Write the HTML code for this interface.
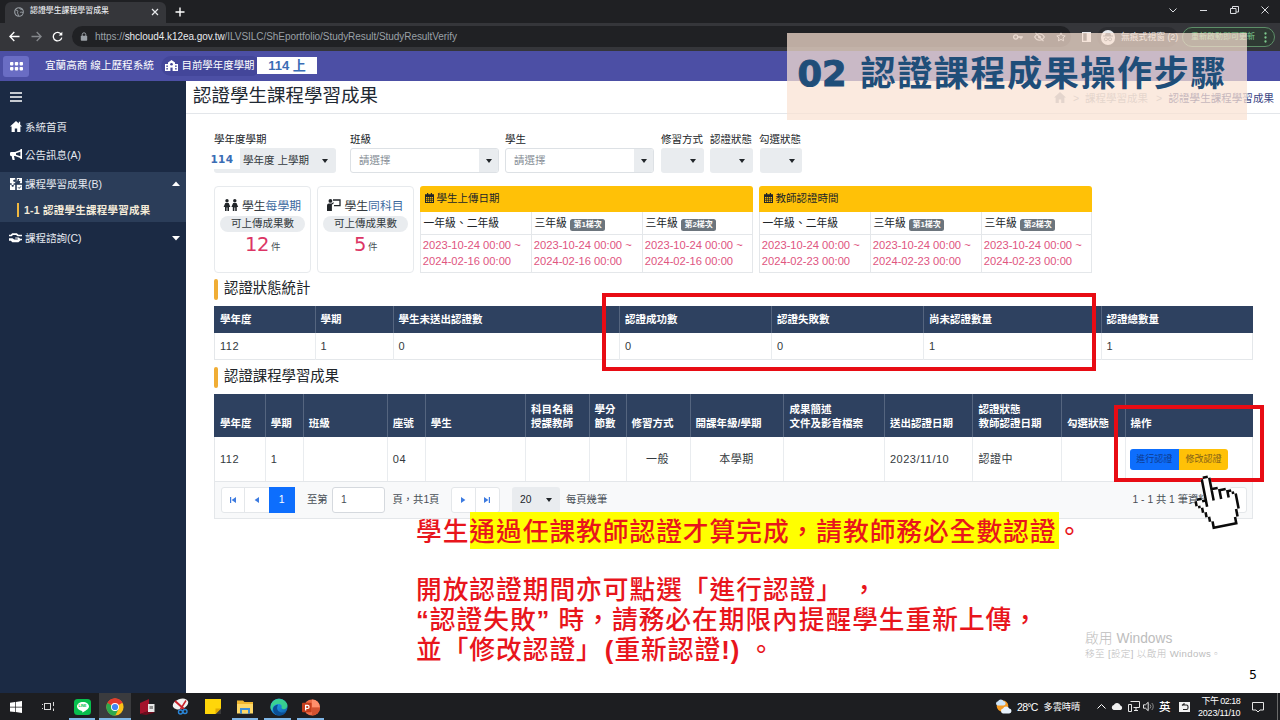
<!DOCTYPE html>
<html lang="zh-Hant">
<head>
<meta charset="utf-8">
<title>認證學生課程學習成果</title>
<style>
*{box-sizing:border-box;margin:0;padding:0}
html,body{width:1280px;height:720px;overflow:hidden;background:#fff}
body{font-family:"Liberation Sans","Noto Sans CJK TC",sans-serif;font-size:11px;color:#212529;position:relative}
.abs{position:absolute}
svg{display:block}
/* browser chrome */
#tabstrip{left:0;top:0;width:1280px;height:23px;background:#1f2023}
#tab{left:5px;top:2px;width:161px;height:21px;background:#35363a;border-radius:6px 6px 0 0}
#tabtitle{left:30px;top:6px;font-weight:500;font-size:7.9px;color:#e8eaed;white-space:nowrap;line-height:10px}
#toolbar{left:0;top:23px;width:1280px;height:28px;background:#35363a}
#urlpill{left:72px;top:26px;width:999px;height:21px;border-radius:11px;background:#202124}
#url{left:95px;top:30px;font-size:10px;line-height:13px;color:#9aa0a6;white-space:nowrap;letter-spacing:-0.05px}
#url b{font-weight:400;color:#e8eaed}
/* app bar */
#appbar{left:0;top:50.500px;width:1280px;height:30.500px;background:#4c4fa5}
#gridbtn{left:3px;top:56px;width:26px;height:21px;border-radius:3px;background:#6a6dc4}
#brand{left:45px;top:59px;font-size:10.6px;line-height:13px;color:#fff;white-space:nowrap}
#sempill{left:161px;top:56px;width:100px;height:20px;border-radius:10px;background:#43469a}
#semlabel{left:181.500px;top:59px;font-size:10.450px;line-height:13px;color:#fff;white-space:nowrap}
#sembox{left:257px;top:57px;width:60px;height:17px;background:#fff;color:#3a6db5;font-weight:700;font-size:13px;line-height:17px;text-align:center;white-space:nowrap}
/* sidebar */
#sidebar{left:0;top:81px;width:186px;height:612px;background:#1b2a44}
.mi{left:0;width:186px;height:28px;color:#e4e8ef;font-size:10.5px;line-height:28px;white-space:nowrap}
.mi span{position:absolute;left:25px;top:0}
/* taskbar */
#taskbar{left:0;top:693px;width:1280px;height:27px;background:#1d1e21}
.tt{color:#fff;white-space:nowrap;font-size:9px;line-height:12px}
.ul{top:718px;height:2px;background:#7fb6e6}
/* overlay title */
#ovl{left:787px;top:33px;width:460px;height:87px;background:rgba(249,226,210,.72)}
#ovltxt{left:860.500px;top:52px;font-size:35.200px;line-height:44px;font-weight:700;color:#1f4e79;white-space:nowrap;letter-spacing:1.450px}
#ovln{left:797.500px;top:52px;font-family:"DejaVu Sans",sans-serif;font-weight:700;font-size:35.300px;line-height:44px;color:#1f4e79;white-space:nowrap;transform-origin:0 50%;transform:scaleX(1.0);-webkit-text-stroke:1px #1f4e79}

/* content */
#ptitle{left:193px;top:84px;font-size:18.5px;line-height:24px;color:#1f2933;white-space:nowrap}
.flabel{top:132px;font-size:10.5px;line-height:14px;color:#212529;white-space:nowrap}
.sel{top:148px;height:24.5px;border-radius:3px;background:#e9ecef}
.selw{top:148px;height:24.5px;border-radius:3px;background:#fff;border:1px solid #dde1e5}
.selw i{position:absolute;right:0;top:0;bottom:0;width:19px;background:#e9ecef;border-radius:0 2px 2px 0}
.ph{top:153px;font-size:10.5px;line-height:14px;color:#868e96;white-space:nowrap}
.tri{width:0;height:0;border-left:3px solid transparent;border-right:3px solid transparent;border-top:4px solid #212529}
.card{top:185.5px;height:87px;border:1px solid #e7eaed;border-radius:4px;background:#fff}
.ctitle{top:198px;font-size:11.8px;line-height:16px;color:#343a40;white-space:nowrap}
.ctitle b{font-weight:400;color:#3d6a9f}
.cpill{top:216px;height:15.5px;border-radius:8px;background:#e9ecef;font-size:10.5px;line-height:15.5px;text-align:center;color:#343a40}
.cnum{top:232px;font-size:21px;line-height:26px;color:#dc3565;white-space:nowrap}
.cunit{top:240.500px;font-size:9.500px;line-height:12px;color:#495057}
.yhead{top:185.5px;height:26.5px;background:#ffc107;border-radius:3px 3px 0 0;font-size:10.5px;line-height:24.5px;color:#212529;white-space:nowrap}
.ybody{top:212px;height:60.5px;border:1px solid #e4e7ea;border-top:0;background:#fff}
.yv{top:212px;width:1px;height:60px;background:#e4e7ea}
.yh{top:234px;height:1px;background:#e4e7ea}
.gr{top:216px;font-size:10.8px;line-height:14px;color:#212529;white-space:nowrap}
.bdg{display:inline-block;vertical-align:.5px;margin-left:3px;background:#6c757d;color:#fff;font-size:8px;line-height:12.500px;font-weight:700;padding:0 3.500px;border-radius:2.500px}
.dt{top:237px;font-size:11.200px;line-height:16px;color:#e0557f;white-space:nowrap;margin-left:-.75px}
.sbar{left:214px;width:4px;border-radius:2px;background:#f0ad35}
.stitle{left:224px;font-size:14.4px;line-height:20px;color:#212529;white-space:nowrap}
.th{background:#2e4160}
.thl{width:1px;background:#55657f}
.tht{font-size:10.500px;line-height:14px;color:#fff;font-weight:700;white-space:nowrap}
.tdt{font-size:11px;line-height:14px;color:#343a40;white-space:nowrap;letter-spacing:.5px}
.tbl{border:1px solid #e4e7ea;background:#fff}
.tdl{width:1px;background:#e9ecef}
.pbtn{top:487px;height:25.5px;background:#fff;border:1px solid #e4e7ea}
.ptx{top:493px;font-size:10.3px;line-height:14px;color:#495057;white-space:nowrap}

.red{color:#e8151c;font-weight:500;font-size:25.700px;line-height:30px;letter-spacing:1px;white-space:nowrap}
.rbox{border:4.500px solid #e80c14}
.red b{font-weight:700}
.wm{color:#bdbdbd;white-space:nowrap}
</style>
</head>
<body>
<!-- ===== browser chrome ===== -->
<div id="tabstrip" class="abs"></div>
<div id="tab" class="abs"></div>
<svg class="abs" style="left:14px;top:7px" width="10" height="10" viewBox="0 0 10 10"><circle cx="5" cy="5" r="4.3" fill="none" stroke="#9aa0a6" stroke-width="1.1"/><path d="M2 3.2C3.5 3 4.2 4 3.6 5.2 3 6.4 4.4 6.8 4.6 8.8M5.5 1C6 2.4 7.4 2.6 8.6 2.4M6.2 5.4c1-.6 2.2-.2 2.8.6" fill="none" stroke="#9aa0a6" stroke-width="1"/></svg>
<div id="tabtitle" class="abs">認證學生課程學習成果</div>
<svg class="abs" style="left:151px;top:8px" width="8" height="8" viewBox="0 0 8 8"><path d="M1 1l6 6M7 1L1 7" stroke="#e8eaed" stroke-width="1.2" fill="none"/></svg>
<svg class="abs" style="left:175px;top:7px" width="10" height="10" viewBox="0 0 10 10"><path d="M5 .5v9M.5 5h9" stroke="#fff" stroke-width="1.4" fill="none"/></svg>
<div id="toolbar" class="abs"></div>
<div id="urlpill" class="abs"></div>
<svg class="abs" style="left:9px;top:31px" width="11" height="11" viewBox="0 0 11 11"><path d="M10.5 5.5H1.2M5.3 1L.9 5.5l4.4 4.5" stroke="#fff" stroke-width="1.3" fill="none"/></svg>
<svg class="abs" style="left:31px;top:31px" width="11" height="11" viewBox="0 0 11 11"><path d="M.5 5.5h9.3M5.7 1l4.4 4.5L5.7 10" stroke="#84878b" stroke-width="1.3" fill="none"/></svg>
<svg class="abs" style="left:52px;top:31px" width="11" height="11" viewBox="0 0 11 11"><path d="M9.2 3.2A4.3 4.3 0 1 0 9.8 6.6" stroke="#fff" stroke-width="1.3" fill="none"/><path d="M10.3.8v3.6H6.7z" fill="#fff"/></svg>
<svg class="abs" style="left:80px;top:32px" width="8" height="9" viewBox="0 0 8 9"><rect x=".8" y="3.8" width="6.4" height="5" rx=".8" fill="#9aa0a6"/><path d="M2.2 4V2.6a1.8 1.8 0 0 1 3.6 0V4" stroke="#9aa0a6" stroke-width="1" fill="none"/></svg>
<div id="url" class="abs">https://<b>shcloud4.k12ea.gov.tw</b>/ILVSILC/ShEportfolio/StudyResult/StudyResultVerify</div>

<svg class="abs" style="left:1169px;top:7.500px" width="8" height="5" viewBox="0 0 8 5"><path d="M.5.500l3.500 3.500L7.500.5" stroke="#dadce0" stroke-width="1" fill="none"/></svg>
<div class="abs" style="left:1200px;top:9.500px;width:7px;height:1px;background:#dadce0"></div>
<svg class="abs" style="left:1229.500px;top:6px" width="9" height="8" viewBox="0 0 9 8"><path d="M.5 2.500h5.500v5H.5z" fill="none" stroke="#dadce0" stroke-width="1"/><path d="M2.500 2.500V.5h6v5.500H6" fill="none" stroke="#dadce0" stroke-width="1"/></svg>
<svg class="abs" style="left:1261px;top:6px" width="8" height="8" viewBox="0 0 8 8"><path d="M.5.500l7 7M7.500.5l-7 7" stroke="#dadce0" stroke-width="1" fill="none"/></svg>
<svg class="abs" style="left:1012.500px;top:34px" width="10" height="6" viewBox="0 0 10 6"><circle cx="2.700" cy="3" r="2.100" fill="none" stroke="#c4c7cc" stroke-width="1.300"/><path d="M4.800 3h5M8 3v2.300" stroke="#c4c7cc" stroke-width="1.300" fill="none"/></svg>
<svg class="abs" style="left:1033.500px;top:32px" width="11" height="10" viewBox="0 0 11 10"><path d="M.6 5C2 2.500 3.700 1.700 5.500 1.700S9 2.500 10.400 5C9 7.500 7.300 8.300 5.500 8.300S2 7.500.6 5z" fill="none" stroke="#c4c7cc" stroke-width="1.100"/><circle cx="5.500" cy="5" r="1.500" fill="#c4c7cc"/><path d="M1.500.8l8 8.400" stroke="#c4c7cc" stroke-width="1.100"/></svg>
<svg class="abs" style="left:1055.500px;top:32px" width="10" height="10" viewBox="0 0 10 10"><path d="M5 .9l1.250 2.700 2.950.35-2.200 2 .6 2.900L5 7.400 2.400 8.850l.6-2.900-2.200-2 2.950-.35z" fill="none" stroke="#c4c7cc" stroke-width="1"/></svg>
<svg class="abs" style="left:1082px;top:32px" width="9" height="10" viewBox="0 0 9 10"><path d="M.6.600h7.800v8.800H.6z" fill="none" stroke="#e8eaed" stroke-width="1.200"/><path d="M4.700.6h3.700v8.800H4.700z" fill="#e8eaed"/></svg>
<div class="abs" style="left:1097px;top:27px;width:81px;height:20px;border-radius:10px;background:#2c2d31"></div>
<div class="abs" style="left:1100.500px;top:30px;width:14.500px;height:14.500px;border-radius:50%;background:#e8eaed"></div>
<svg class="abs" style="left:1103px;top:33px" width="10" height="9" viewBox="0 0 10 9"><path d="M2.800 0h4.400l.9 2.600H10v.9H0v-.9h1.900z" fill="#5f6368"/><circle cx="2.900" cy="6.300" r="1.500" fill="none" stroke="#5f6368" stroke-width=".9"/><circle cx="7.100" cy="6.300" r="1.500" fill="none" stroke="#5f6368" stroke-width=".9"/><path d="M4.400 6.100h1.200" stroke="#5f6368" stroke-width=".8"/></svg>
<div class="abs" style="left:1121px;top:31px;font-size:8.800px;line-height:12px;color:#e8eaed;white-space:nowrap">無痕式視窗 (2)</div>
<div class="abs" style="left:1182px;top:26.500px;width:92.500px;height:20.500px;border-radius:10.500px;border:1px solid #5d8f68;background:#2e3a33"></div>
<div class="abs" style="left:1191px;top:31px;font-size:8px;line-height:12px;color:#7ecb8f;white-space:nowrap">重新啟動即可更新</div>
<svg class="abs" style="left:1264px;top:31.500px" width="3" height="11" viewBox="0 0 3 11"><g fill="#7ecb8f"><circle cx="1.500" cy="1.500" r="1.150"/><circle cx="1.500" cy="5.500" r="1.150"/><circle cx="1.500" cy="9.500" r="1.150"/></g></svg>
<!-- ===== app bar ===== -->
<div id="appbar" class="abs"></div>
<div id="gridbtn" class="abs"></div>
<svg class="abs" style="left:10px;top:62px" width="13" height="9" viewBox="0 0 13 9"><g fill="#fff"><rect x="0" y="0" width="3.4" height="3.4" rx=".8"/><rect x="4.8" y="0" width="3.4" height="3.4" rx=".8"/><rect x="9.6" y="0" width="3.4" height="3.4" rx=".8"/><rect x="0" y="5" width="3.4" height="3.4" rx=".8"/><rect x="4.8" y="5" width="3.4" height="3.4" rx=".8"/><rect x="9.6" y="5" width="3.4" height="3.4" rx=".8"/></g></svg>
<div id="brand" class="abs">宜蘭高商 線上歷程系統</div>
<div id="sempill" class="abs"></div>
<svg class="abs" style="left:165px;top:60px" width="13" height="11" viewBox="0 0 13 11"><path d="M6.5 0L10 2.6V4h3v7H0V4h3V2.6z" fill="#fff"/><g fill="#43469a"><rect x="1.4" y="5.4" width="1.4" height="1.6"/><rect x="1.4" y="8" width="1.4" height="1.6"/><rect x="10.2" y="5.4" width="1.4" height="1.6"/><rect x="10.2" y="8" width="1.4" height="1.6"/><rect x="5.4" y="7.6" width="2.2" height="3.4"/><circle cx="6.5" cy="4.2" r="1.3"/></g></svg>
<div id="semlabel" class="abs">目前學年度學期</div>
<div id="sembox" class="abs">114 上</div>

<!-- ===== sidebar ===== -->
<div id="sidebar" class="abs"></div>

<svg class="abs" style="left:10px;top:92px" width="12" height="10" viewBox="0 0 12 10"><path d="M0 1h12M0 5h12M0 9h12" stroke="#fff" stroke-width="1.7" fill="none"/></svg>
<div class="abs" style="left:0;top:172px;width:186px;height:50px;background:#2b3d59"></div>
<svg class="abs" style="left:10px;top:121px" width="12" height="11" viewBox="0 0 12 11"><path d="M6 0L0 5.400h1.600V11h3.200V7.400h2.400V11h3.200V5.400H12L10.200 3.800V.8H8.800v1.700z" fill="#fff"/></svg>
<div class="abs mi" style="top:113px"><span>系統首頁</span></div>
<svg class="abs" style="left:10px;top:149px" width="12" height="12" viewBox="0 0 12 12"><path d="M10.400 0v1L5 3H1.200Q0 3 0 4.200v1.600Q0 7 1.200 7h.4l.8 3.600q.1.400.5.400h1.400q.5 0 .4-.5L4 7h1l5.400 2v1H12V0zM10.400 2.700v4.600L6 5.800V4.200z" fill="#fff" fill-rule="evenodd"/></svg>
<div class="abs mi" style="top:141px"><span>公告訊息(A)</span></div>
<svg class="abs" style="left:10px;top:178px" width="12" height="12" viewBox="0 0 12 12"><g fill="#fff"><path d="M0 0h5.200v2.200a1.100 1.100 0 1 0 0 1.100V5.200H3.500a1.100 1.100 0 1 1-1.700 0H0z"/><path d="M6.800 0H12v5.200H9.700L10.400 3H8.700L9.400.900H7.900L6.800 4z"/><path d="M0 6.800h2a1.100 1.100 0 1 0 1.400 0h1.800V12H0z"/><path d="M6.800 6.800H12V12H6.800z"/></g><path d="M8.200 9.400l1 1 1.700-2" stroke="#2b3d59" stroke-width="1" fill="none"/></svg>
<div class="abs mi" style="top:170px"><span>課程學習成果(B)</span></div>
<svg class="abs" style="left:172px;top:181px" width="8" height="5" viewBox="0 0 8 5"><path d="M0 5l4-4.600L8 5z" fill="#fff"/></svg>
<div class="abs" style="left:17px;top:203px;width:2px;height:14px;background:#f0b840"></div>
<div class="abs mi" style="top:196px;font-weight:700;color:#f3ead8;font-size:10.500px;letter-spacing:.25px"><span style="left:24px">1-1 認證學生課程學習成果</span></div>
<svg class="abs" style="left:9px;top:232px" width="13" height="11" viewBox="0 0 13 11"><path d="M3.200 1.200h4.600l1.700 1.500H13v1.600H8.600L7 3H4L2.600 4.300H0V2.700h1.700zM0 6.200h3.500l1.700 1.400h3.300c.6 0 .6-1-.1-1H6.200V5.500h3.600L11.200 6.700H13v1.600h-1.300L9.400 10.300H3.300L1.800 8.800H0z" fill="#fff"/></svg>
<div class="abs mi" style="top:224px"><span>課程諮詢(C)</span></div>
<svg class="abs" style="left:172px;top:236px" width="8" height="5" viewBox="0 0 8 5"><path d="M0 0l4 4.600L8 0z" fill="#fff"/></svg>


<div id="ptitle" class="abs">認證學生課程學習成果</div>
<div class="abs" style="left:186px;top:112.500px;width:1094px;height:1px;background:#e3e6ea"></div>
<svg class="abs" style="left:1054px;top:92px" width="12" height="11" viewBox="0 0 12 11"><path d="M6 0L0 5.400h1.600V11h3.200V7.400h2.400V11h3.200V5.400H12z" fill="#adb5bd"/></svg>
<div class="abs" style="left:1073px;top:91px;font-size:10.500px;line-height:14px;color:#adb5bd;white-space:nowrap">&gt;</div><div class="abs" style="left:1085px;top:91px;font-size:10.500px;line-height:14px;color:#adb5bd;white-space:nowrap">課程學習成果</div><div class="abs" style="left:1156px;top:91px;font-size:10.500px;line-height:14px;color:#adb5bd;white-space:nowrap">&gt;</div><div class="abs" style="left:1168.500px;top:91px;font-size:10.550px;line-height:14px;color:#3c4684;white-space:nowrap">認證學生課程學習成果</div>
<div class="abs flabel" style="left:214px">學年度學期</div>
<div class="abs flabel" style="left:350px">班級</div>
<div class="abs flabel" style="left:505px">學生</div>
<div class="abs flabel" style="left:661px">修習方式</div>
<div class="abs flabel" style="left:710px">認證狀態</div>
<div class="abs flabel" style="left:759px">勾選狀態</div>
<div class="abs sel" style="left:214px;width:122px"></div>
<div class="abs" style="left:243px;top:153px;font-size:10.5px;line-height:14px;color:#343a40;white-space:nowrap">學年度 上學期</div>
<div class="abs tri" style="left:322px;top:158.500px"></div>
<div class="abs" style="left:210px;top:148px;width:30px;height:21px;background:#fff"></div>
<div class="abs" style="left:210.500px;top:152px;font-size:11.5px;line-height:14px;font-weight:700;color:#3a6db5;letter-spacing:.3px;font-family:'DejaVu Sans',sans-serif;font-size:10.500px">114</div>
<div class="abs selw" style="left:350px;width:148.500px"><i></i></div>
<div class="abs ph" style="left:359px">請選擇</div>
<div class="abs tri" style="left:485.500px;top:158.500px"></div>
<div class="abs selw" style="left:505px;width:149px"><i></i></div>
<div class="abs ph" style="left:514px">請選擇</div>
<div class="abs tri" style="left:641px;top:158.500px"></div>
<div class="abs sel" style="left:661px;width:42.500px"></div>
<div class="abs tri" style="left:690px;top:158.500px"></div>
<div class="abs sel" style="left:710px;width:42.500px"></div>
<div class="abs tri" style="left:739px;top:158.500px"></div>
<div class="abs sel" style="left:759.5px;width:42.500px"></div>
<div class="abs tri" style="left:788.5px;top:158.500px"></div>
<div class="abs card" style="left:214px;width:97px"></div>
<div class="abs card" style="left:317px;width:96.500px"></div>
<svg class="abs" style="left:223px;top:199px" width="16" height="12" viewBox="0 0 16 12"><g fill="#212529"><circle cx="4" cy="1.700" r="1.700"/><path d="M2.300 4h3.400L7.400 8H6v4H4.400V8.500h-.8V12H2V8H.6z"/><circle cx="11.800" cy="1.700" r="1.700"/><path d="M10.100 4h3.400L15.200 8h-1.400v4h-1.600V8.500h-.8V12H9.800V8H8.400z"/></g></svg>
<div class="abs ctitle" style="left:242px">學生<b>每學期</b></div>
<div class="abs cpill" style="left:220px;width:85px">可上傳成果數</div>
<div class="abs cnum" style="left:245px;font-family:'DejaVu Sans',sans-serif;letter-spacing:-.5px;font-size:19.500px">12</div>
<div class="abs cunit" style="left:271px">件</div>
<svg class="abs" style="left:327px;top:199px" width="14" height="12" viewBox="0 0 14 12"><g fill="#212529"><circle cx="3.400" cy="1.900" r="1.900"/><path d="M0 12V6.500Q0 4.600 1.900 4.600h2.600l1.800-1.400.7.900L4.900 5.800V12z"/></g><path d="M6 1h7v5.600H7" fill="none" stroke="#212529" stroke-width="1.300"/></svg>
<div class="abs ctitle" style="left:344.500px">學生<b>同科目</b></div>
<div class="abs cpill" style="left:323px;width:85px">可上傳成果數</div>
<div class="abs cnum" style="left:354px;font-family:'DejaVu Sans',sans-serif;font-size:19.500px">5</div>
<div class="abs cunit" style="left:368px">件</div>
<div class="abs ybody" style="left:419.5px;width:333px"></div>
<div class="abs yhead" style="left:419.5px;width:333px;padding-left:5px"><svg style="display:inline-block;vertical-align:-1px;margin-right:3px" width="9" height="10" viewBox="0 0 9 10"><path d="M2 0h1.200v1.200h2.600V0H7v1.200h2V10H0V1.200h2zM1 4v5h7V4z" fill="#212529" fill-rule="evenodd"/><path d="M2.600 4v5M4.500 4v5M6.400 4v5M1 5.700h7M1 7.400h7" stroke="#212529" stroke-width=".7"/></svg>學生上傳日期</div>
<div class="abs yh" style="left:419.5px;width:333px"></div>
<div class="abs gr" style="left:423.5px">一年級、二年級</div>
<div class="abs dt" style="left:423.5px">2023-10-24 00:00 ~<br>2024-02-16 00:00</div>
<div class="abs yv" style="left:530.5px"></div>
<div class="abs gr" style="left:534.5px">三年級<span class="bdg">第1梯次</span></div>
<div class="abs dt" style="left:534.5px">2023-10-24 00:00 ~<br>2024-02-16 00:00</div>
<div class="abs yv" style="left:641.5px"></div>
<div class="abs gr" style="left:645.5px">三年級<span class="bdg">第2梯次</span></div>
<div class="abs dt" style="left:645.5px">2023-10-24 00:00 ~<br>2024-02-16 00:00</div>
<div class="abs ybody" style="left:758.5px;width:333px"></div>
<div class="abs yhead" style="left:758.5px;width:333px;padding-left:5px"><svg style="display:inline-block;vertical-align:-1px;margin-right:3px" width="9" height="10" viewBox="0 0 9 10"><path d="M2 0h1.200v1.200h2.600V0H7v1.200h2V10H0V1.200h2zM1 4v5h7V4z" fill="#212529" fill-rule="evenodd"/><path d="M2.600 4v5M4.500 4v5M6.400 4v5M1 5.700h7M1 7.400h7" stroke="#212529" stroke-width=".7"/></svg>教師認證時間</div>
<div class="abs yh" style="left:758.5px;width:333px"></div>
<div class="abs gr" style="left:762.5px">一年級、二年級</div>
<div class="abs dt" style="left:762.5px">2023-10-24 00:00 ~<br>2024-02-23 00:00</div>
<div class="abs yv" style="left:869.5px"></div>
<div class="abs gr" style="left:873.5px">三年級<span class="bdg">第1梯次</span></div>
<div class="abs dt" style="left:873.5px">2023-10-24 00:00 ~<br>2024-02-23 00:00</div>
<div class="abs yv" style="left:980.5px"></div>
<div class="abs gr" style="left:984.5px">三年級<span class="bdg">第2梯次</span></div>
<div class="abs dt" style="left:984.5px">2023-10-24 00:00 ~<br>2024-02-23 00:00</div>
<div class="abs sbar" style="top:278.500px;height:21px"></div>
<div class="abs stitle" style="top:278px">認證狀態統計</div>
<div class="abs th" style="left:214px;top:306px;width:1038.500px;height:26.500px"></div>
<div class="abs tbl" style="left:214px;top:332.500px;width:1038.500px;height:27.500px;border-top:0"></div>
<div class="abs tht" style="left:220px;top:312px">學年度</div>
<div class="abs tdt" style="left:220px;top:339px">112</div>
<div class="abs thl" style="left:314.5px;top:306px;height:26.500px"></div>
<div class="abs tdl" style="left:314.5px;top:332.500px;height:27px"></div>
<div class="abs tht" style="left:320.5px;top:312px">學期</div>
<div class="abs tdt" style="left:320.5px;top:339px">1</div>
<div class="abs thl" style="left:392.5px;top:306px;height:26.500px"></div>
<div class="abs tdl" style="left:392.5px;top:332.500px;height:27px"></div>
<div class="abs tht" style="left:398.5px;top:312px">學生未送出認證數</div>
<div class="abs tdt" style="left:398.5px;top:339px">0</div>
<div class="abs thl" style="left:619px;top:306px;height:26.500px"></div>
<div class="abs tdl" style="left:619px;top:332.500px;height:27px"></div>
<div class="abs tht" style="left:625px;top:312px">認證成功數</div>
<div class="abs tdt" style="left:625px;top:339px">0</div>
<div class="abs thl" style="left:771px;top:306px;height:26.500px"></div>
<div class="abs tdl" style="left:771px;top:332.500px;height:27px"></div>
<div class="abs tht" style="left:777px;top:312px">認證失敗數</div>
<div class="abs tdt" style="left:777px;top:339px">0</div>
<div class="abs thl" style="left:923px;top:306px;height:26.500px"></div>
<div class="abs tdl" style="left:923px;top:332.500px;height:27px"></div>
<div class="abs tht" style="left:929px;top:312px">尚未認證數量</div>
<div class="abs tdt" style="left:929px;top:339px">1</div>
<div class="abs thl" style="left:1100.5px;top:306px;height:26.500px"></div>
<div class="abs tdl" style="left:1100.5px;top:332.500px;height:27px"></div>
<div class="abs tht" style="left:1106.5px;top:312px">認證總數量</div>
<div class="abs tdt" style="left:1106.5px;top:339px">1</div>
<div class="abs sbar" style="top:366.500px;height:21.500px"></div>
<div class="abs stitle" style="top:366px">認證課程學習成果</div>
<div class="abs th" style="left:214px;top:394px;width:1038.500px;height:43px"></div>
<div class="abs tbl" style="left:214px;top:437px;width:1038.500px;height:44.500px;border-top:0"></div>
<div class="abs" style="left:214px;top:481.500px;width:1038.500px;height:37.500px;background:#f8f9fa;border:1px solid #e4e7ea;border-top:0"></div>
<div class="abs tht" style="left:220px;top:416px;line-height:14.600px">學年度</div>
<div class="abs tdt" style="left:220px;top:452px">112</div>
<div class="abs thl" style="left:264.7px;top:394px;height:43px"></div>
<div class="abs tdl" style="left:264.7px;top:437px;height:44px"></div>
<div class="abs tht" style="left:270.7px;top:416px;line-height:14.600px">學期</div>
<div class="abs tdt" style="left:270.7px;top:452px">1</div>
<div class="abs thl" style="left:302.8px;top:394px;height:43px"></div>
<div class="abs tdl" style="left:302.8px;top:437px;height:44px"></div>
<div class="abs tht" style="left:308.8px;top:416px;line-height:14.600px">班級</div>
<div class="abs thl" style="left:386.8px;top:394px;height:43px"></div>
<div class="abs tdl" style="left:386.8px;top:437px;height:44px"></div>
<div class="abs tht" style="left:392.8px;top:416px;line-height:14.600px">座號</div>
<div class="abs tdt" style="left:392.8px;top:452px">04</div>
<div class="abs thl" style="left:424.8px;top:394px;height:43px"></div>
<div class="abs tdl" style="left:424.8px;top:437px;height:44px"></div>
<div class="abs tht" style="left:430.8px;top:416px;line-height:14.600px">學生</div>
<div class="abs thl" style="left:525px;top:394px;height:43px"></div>
<div class="abs tdl" style="left:525px;top:437px;height:44px"></div>
<div class="abs tht" style="left:531px;top:401.5px;line-height:14.600px">科目名稱<br>授課教師</div>
<div class="abs thl" style="left:588.5px;top:394px;height:43px"></div>
<div class="abs tdl" style="left:588.5px;top:437px;height:44px"></div>
<div class="abs tht" style="left:594.5px;top:401.5px;line-height:14.600px">學分<br>節數</div>
<div class="abs thl" style="left:625.6px;top:394px;height:43px"></div>
<div class="abs tdl" style="left:625.6px;top:437px;height:44px"></div>
<div class="abs tht" style="left:631.6px;top:416px;line-height:14.600px">修習方式</div>
<div class="abs tdt" style="left:625.6px;width:63.89999999999998px;text-align:center;top:452px">一般</div>
<div class="abs thl" style="left:689.5px;top:394px;height:43px"></div>
<div class="abs tdl" style="left:689.5px;top:437px;height:44px"></div>
<div class="abs tht" style="left:695.5px;top:416px;line-height:14.600px">開課年級/學期</div>
<div class="abs tdt" style="left:689.5px;width:93.89999999999998px;text-align:center;top:452px">本學期</div>
<div class="abs thl" style="left:783.4px;top:394px;height:43px"></div>
<div class="abs tdl" style="left:783.4px;top:437px;height:44px"></div>
<div class="abs tht" style="left:789.4px;top:401.5px;line-height:14.600px">成果簡述<br>文件及影音檔案</div>
<div class="abs thl" style="left:884px;top:394px;height:43px"></div>
<div class="abs tdl" style="left:884px;top:437px;height:44px"></div>
<div class="abs tht" style="left:890px;top:416px;line-height:14.600px">送出認證日期</div>
<div class="abs tdt" style="left:890px;top:452px">2023/11/10</div>
<div class="abs thl" style="left:972.4px;top:394px;height:43px"></div>
<div class="abs tdl" style="left:972.4px;top:437px;height:44px"></div>
<div class="abs tht" style="left:978.4px;top:401.5px;line-height:14.600px">認證狀態<br>教師認證日期</div>
<div class="abs tdt" style="left:978.4px;top:452px">認證中</div>
<div class="abs thl" style="left:1061px;top:394px;height:43px"></div>
<div class="abs tdl" style="left:1061px;top:437px;height:44px"></div>
<div class="abs tht" style="left:1067px;top:416px;line-height:14.600px">勾選狀態</div>
<div class="abs thl" style="left:1124.6px;top:394px;height:43px"></div>
<div class="abs tdl" style="left:1124.6px;top:437px;height:44px"></div>
<div class="abs tht" style="left:1130.6px;top:416px;line-height:14.600px">操作</div>
<div class="abs" style="left:1130px;top:449px;width:48.500px;height:20.500px;background:#0d6efd;border-radius:3px 0 0 3px;font-size:9px;line-height:20.500px;text-align:center;color:#0f3a8c;white-space:nowrap">進行認證</div>
<div class="abs" style="left:1178.500px;top:449px;width:49.800px;height:20.500px;background:#ffc107;border-radius:0 3px 3px 0;font-size:9px;line-height:20.500px;text-align:center;color:#80601a;white-space:nowrap">修改認證</div>
<div class="abs pbtn" style="left:220.500px;width:24px;border-radius:3px 0 0 3px"><svg width="6" height="6" viewBox="0 0 6 6" style="margin:9px auto 0"><path d="M0 0h1.200v6H0zM6 0v6L1.600 3z" fill="#3d7be0"/></svg></div>
<div class="abs pbtn" style="left:243.500px;width:26px"><svg width="6" height="6" viewBox="0 0 6 6" style="margin:9px auto 0"><path d="M5 0v6L.6 3z" fill="#3d7be0"/></svg></div>
<div class="abs" style="left:269px;top:487px;width:25.500px;height:25.500px;background:#0d6efd;color:#fff;font-size:10.500px;line-height:25.500px;text-align:center">1</div>
<div class="abs ptx" style="left:307px">至第</div>
<div class="abs" style="left:332px;top:487px;width:53px;height:25.500px;background:#fff;border:1px solid #d5d9de;border-radius:3px"></div>
<div class="abs ptx" style="left:341px">1</div>
<div class="abs ptx" style="left:392.500px">頁，共1頁</div>
<div class="abs pbtn" style="left:450.500px;width:25px;border-radius:3px 0 0 3px"><svg width="6" height="6" viewBox="0 0 6 6" style="margin:9px auto 0"><path d="M1 0v6l4.400-3z" fill="#3d7be0"/></svg></div>
<div class="abs pbtn" style="left:474.500px;width:25px;border-radius:0 3px 3px 0"><svg width="6" height="6" viewBox="0 0 6 6" style="margin:9px auto 0"><path d="M4.800 0H6v6H4.800zM0 0v6l4.400-3z" fill="#3d7be0"/></svg></div>
<div class="abs" style="left:511.500px;top:487px;width:48px;height:25.500px;background:#e9ecef;border-radius:3px"></div>
<div class="abs ptx" style="left:520px;color:#212529">20</div>
<div class="abs tri" style="left:546px;top:498px"></div>
<div class="abs ptx" style="left:566px">每頁幾筆</div>
<div class="abs ptx" style="left:1132.500px">1 - 1 共 1 筆資料</div>
<div class="abs" style="left:1229px;top:487px;width:18px;height:25.500px;background:#fff;border:1px solid #e4e7ea;border-radius:3px"></div>

<!-- ===== taskbar ===== -->
<div id="taskbar" class="abs"></div>
<svg class="abs" style="left:10px;top:701px" width="12" height="12" viewBox="0 0 12 12"><path d="M0 1.700L5 1v4.700H0zM5.700.9L12 0v5.700H5.700zM0 6.400h5v4.700l-5-.7zM5.700 6.400H12V12l-6.300-.9z" fill="#fff"/></svg>
<svg class="abs" style="left:42px;top:701px" width="13" height="11" viewBox="0 0 13 11"><g fill="none" stroke="#d8d8d8" stroke-width="1"><rect x="2.500" y="2.500" width="6" height="6"/><path d="M2.500.5v.01M8.500.5v.01M0 3.500h1M0 7.500h1M2.500 10.500v.01M8.500 10.500v.01M11.500 1v4M11.500 7.500v2.500"/></g></svg>
<div class="abs" style="left:99px;top:693px;width:32px;height:27px;background:#3a3b3e"></div>
<div class="abs ul" style="left:68.500px;width:26.500px"></div>
<div class="abs ul" style="left:99px;width:32px"></div>
<div class="abs ul" style="left:231.500px;width:26.500px"></div>
<div class="abs ul" style="left:264px;width:27px"></div>
<div class="abs ul" style="left:297px;width:26.500px"></div>
<!-- LINE -->
<div class="abs" style="left:74px;top:699px;width:16.500px;height:15.500px;border-radius:3.500px;background:#08bf4e"></div>
<svg class="abs" style="left:76.500px;top:701.500px" width="12" height="11" viewBox="0 0 12 11"><path d="M6 0C2.700 0 0 2 0 4.500 0 6.700 2.100 8.500 5 8.900c.5.100.4.500.3 1.200-.1.500.3.500 1.500-.3C9 8.300 12 6.800 12 4.500 12 2 9.300 0 6 0z" fill="#fff"/></svg>
<div class="abs" style="left:76.500px;top:704px;width:12px;text-align:center;font-size:3.600px;line-height:4px;font-weight:700;color:#08bf4e;letter-spacing:-.1px">LINE</div>
<!-- Chrome -->
<svg class="abs" style="left:106px;top:698px" width="18" height="18" viewBox="0 0 18 18"><circle cx="9" cy="9" r="8.600" fill="#fbc116"/><path d="M9 9L1.550 4.700A8.600 8.600 0 0 1 16.450 4.700z" fill="#e33b2e"/><path d="M9 9L1.550 4.700A8.600 8.600 0 0 0 9.300 17.600L12.500 11z" fill="#2da94f"/><path d="M9 5h7.600A8.600 8.600 0 0 0 1.550 4.700L5.400 7.200A4 4 0 0 1 9 5z" fill="#e33b2e"/><circle cx="9" cy="9" r="4" fill="#fff"/><circle cx="9" cy="9" r="3.100" fill="#4285f4"/></svg>
<!-- red book -->
<svg class="abs" style="left:140px;top:699px" width="16" height="16" viewBox="0 0 16 16"><path d="M0 4L9 0v12L0 15z" fill="#a3122b"/><path d="M0 15l9-3 6 1.500L6 16z" fill="#6e0c1d"/><path d="M8 5h6.500v8L8 13z" fill="#e8e8e8"/><path d="M9.500 7h3.500v3H9.500z" fill="#8c8c8c"/></svg>
<!-- snip -->
<svg class="abs" style="left:172px;top:698px" width="17" height="17" viewBox="0 0 17 17"><ellipse cx="8.500" cy="6" rx="8" ry="5" fill="#f2f2f2" transform="rotate(-20 8.500 6)"/><path d="M3 3l9 8" stroke="#c8202a" stroke-width="2"/><path d="M14 2.500L8 12" stroke="#c8202a" stroke-width="1.500"/><circle cx="8.500" cy="14" r="2" fill="none" stroke="#2a86d8" stroke-width="1.400"/><circle cx="13" cy="13.500" r="2" fill="none" stroke="#2a86d8" stroke-width="1.400"/></svg>
<!-- sticky -->
<svg class="abs" style="left:205px;top:699px" width="16" height="15" viewBox="0 0 16 15"><path d="M0 0h16v15H0z" fill="#ffd60a"/><path d="M10.500 15L16 9.500V15z" fill="#3a3a3a"/><path d="M10.500 15V9.500H16z" fill="#e0a800"/></svg>
<!-- explorer -->
<svg class="abs" style="left:237px;top:699px" width="16" height="15" viewBox="0 0 16 15"><path d="M0 1.500h6l1.500 1.500H16v11H0z" fill="#f0b732"/><path d="M0 5h16v9.500H0z" fill="#ffd867"/><path d="M3 9h10v5.500H3z" fill="#3f8fd8"/><path d="M5 11h6v3.500H5z" fill="#ffd867"/></svg>
<!-- edge -->
<svg class="abs" style="left:269.500px;top:698px" width="18" height="18" viewBox="0 0 18 18"><defs><linearGradient id="eg" x1="0" y1="0" x2="1" y2="1"><stop offset="0" stop-color="#35c1f1"/><stop offset=".5" stop-color="#1b88d8"/><stop offset="1" stop-color="#0c59a4"/></linearGradient></defs><circle cx="9" cy="9" r="8.600" fill="url(#eg)"/><path d="M.6 10C.6 4 5 1 9 1c5 0 8.400 3.600 8.400 6.600 0 2.400-1.800 3.600-3.600 3.600-1.700 0-2.600-.8-2.300-1.600.5-1.200.1-3.600-2.900-3.600C5 6 2 8.500 2.300 12.500 1.200 11.800.6 11 .6 10z" fill="#3ddb85" opacity=".85"/><path d="M7.200 9.300c-.5 2.600 1.600 5.300 5.300 5.300 1.600 0 3-.7 3.700-1.400-1 2.600-3.800 4.400-7 4.400A6.400 6.400 0 0 1 3 11.200C3 8.500 5.600 6.800 8 6.800c-.4.600-.7 1.600-.8 2.500z" fill="#0b4f96"/></svg>
<!-- ppt -->
<svg class="abs" style="left:301.500px;top:698.500px" width="18" height="17" viewBox="0 0 18 17"><circle cx="10" cy="8.500" r="8" fill="#ed6c47"/><path d="M10 .5a8 8 0 0 1 8 8h-8z" fill="#ff8f6b"/><path d="M10 16.500a8 8 0 0 0 8-8h-8z" fill="#d35230"/><rect x="0" y="3.700" width="9.600" height="9.600" rx="1" fill="#c43e1c"/><path d="M3 5.800h2.600a2.100 2.100 0 0 1 0 4.200H4.300v1.400H3zM4.300 6.900v2h1.100a1 1 0 0 0 0-2z" fill="#fff" fill-rule="evenodd"/></svg>
<!-- weather -->
<svg class="abs" style="left:995px;top:698px" width="17" height="16" viewBox="0 0 17 16"><circle cx="7.500" cy="8" r="5.800" fill="#f59b23"/><path d="M1 5.500a2.200 2.200 0 0 1 2-2.200 3 3 0 0 1 5.600 0A2.100 2.100 0 0 1 8.400 7.500H2.600A2 2 0 0 1 1 5.500z" fill="#cfe6fa"/><path d="M6 13a2.300 2.300 0 0 1 2-2.400 3.300 3.300 0 0 1 6.200 0A2.400 2.400 0 0 1 14 15.400H8A2.400 2.400 0 0 1 6 13z" fill="#e8f2fc"/></svg>
<div class="abs tt" style="left:1017px;top:700.500px;font-size:10.500px;letter-spacing:-.7px">28°C</div>
<div class="abs tt" style="left:1043.500px;top:701px;font-size:9.200px">多雲時晴</div>
<svg class="abs" style="left:1097px;top:704px" width="9" height="5" viewBox="0 0 9 5"><path d="M.5 4.500l4-4 4 4" stroke="#fff" stroke-width="1" fill="none"/></svg>
<svg class="abs" style="left:1111px;top:703px" width="12" height="7" viewBox="0 0 12 7"><path d="M2.600 7A2.600 2.600 0 0 1 2.800 2 3.600 3.600 0 0 1 9.400 2.600 2.300 2.300 0 0 1 9.600 7z" fill="#f0f0f0"/></svg>
<svg class="abs" style="left:1128px;top:701px" width="12" height="11" viewBox="0 0 12 11"><g fill="none" stroke="#e6e6e6" stroke-width="1"><path d="M2.500.5h9v6h-6"/><path d="M.5 3.500h3v7h-3z"/><path d="M6 9.500h4M8 6.500v3"/></g></svg>
<svg class="abs" style="left:1143px;top:701px" width="12" height="11" viewBox="0 0 12 11"><path d="M.5 3.800h2l2.700-2.500v8.400L2.500 7.200h-2z" fill="none" stroke="#e6e6e6" stroke-width="1"/><path d="M7 3.500a3 3 0 0 1 0 4M8.800 2a5 5 0 0 1 0 7" fill="none" stroke="#9a9a9a" stroke-width=".9"/></svg>
<div class="abs tt" style="left:1159px;top:699.500px;font-size:11.500px;line-height:14px;font-weight:500">英</div>
<div class="abs" style="left:1179px;top:701.500px;width:10.500px;height:10.500px;background:#f2f2f2"></div>
<svg class="abs" style="left:1180.500px;top:703px" width="8" height="8" viewBox="0 0 8 8"><path d="M1 2.500L3 .8v1.200h2.500Q7 2 7 3.500V5Q7 6.500 5.500 6.500H2" fill="none" stroke="#222" stroke-width="1.100"/></svg>
<div class="abs tt" style="left:1201.500px;top:694.500px;letter-spacing:-.55px">下午 02:18</div>
<div class="abs tt" style="left:1198px;top:706.500px;letter-spacing:-.2px">2023/11/10</div>
<svg class="abs" style="left:1252px;top:701.500px" width="12" height="11" viewBox="0 0 12 11"><path d="M.5.500h11v7.500H8L6 10 4 8H.5z" fill="none" stroke="#e6e6e6" stroke-width="1"/></svg>
<div class="abs" style="left:1277px;top:693px;width:1px;height:27px;background:#6a6a6a"></div>


<!-- ===== slide overlay ===== -->
<div class="abs rbox" style="left:602px;top:293px;width:494px;height:77.500px"></div>
<div class="abs rbox" style="left:1114px;top:405px;width:150px;height:76.500px"></div>
<div class="abs" style="left:469.500px;top:512px;width:589px;height:37px;background:#ffff00"></div>
<div class="abs red" style="left:416px;top:517px">學生通過任課教師認證才算完成，請教師務必全數認證。</div>
<div class="abs red" style="left:416px;top:575px">開放認證期間亦可點選「進行認證」 ，</div>
<div class="abs red" style="left:416px;top:605px"><b>“</b>認證失敗<b>”</b> 時，請務必在期限內提醒學生重新上傳，</div>
<div class="abs red" style="left:416px;top:634.500px">並「修改認證」<b style="margin-left:2px">(</b>重新認證<b>!)</b> 。</div>
<div class="abs wm" style="left:1085px;top:630px;font-size:13.800px;line-height:18px;font-weight:300">啟用 Windows</div>
<div class="abs wm" style="left:1085px;top:647.500px;font-size:9.600px;line-height:12px;font-weight:300;letter-spacing:.35px">移至 [設定] 以啟用 Windows。</div>
<div class="abs" style="left:1249px;top:667px;font-size:12.500px;line-height:16px;color:#000;font-family:'DejaVu Sans',sans-serif">5</div>

<svg class="abs" style="left:1190px;top:478.6px;overflow:visible" width="1" height="1"><g transform="rotate(-11) scale(2.55)"><path d="M5 0h2v1h-2zM4 1h4v1h-4zM4 2h4v1h-4zM4 3h4v1h-4zM4 4h4v1h-4zM4 5h6v1h-6zM4 6h9v1h-9zM4 7h11v1h-11zM1 8h2v1h-2zM4 8h12v1h-12zM0 9h17v1h-17zM0 10h17v1h-17zM1 11h16v1h-16zM2 12h15v1h-15zM2 13h15v1h-15zM3 14h14v1h-14zM3 15h13v1h-13zM4 16h12v1h-12zM4 17h12v1h-12zM5 18h10v1h-10zM5 19h10v1h-10zM5 20h10v1h-10z" fill="#fff"/><path d="M5 0h2v1h-2zM4 1h1v1h-1zM7 1h1v1h-1zM4 2h1v1h-1zM7 2h1v1h-1zM4 3h1v1h-1zM7 3h1v1h-1zM4 4h1v1h-1zM7 4h1v1h-1zM4 5h1v1h-1zM7 5h3v1h-3zM4 6h1v1h-1zM7 6h1v1h-1zM10 6h3v1h-3zM4 7h1v1h-1zM7 7h1v1h-1zM10 7h1v1h-1zM13 7h2v1h-2zM1 8h2v1h-2zM4 8h1v1h-1zM7 8h1v1h-1zM10 8h1v1h-1zM13 8h1v1h-1zM15 8h1v1h-1zM0 9h1v1h-1zM3 9h2v1h-2zM7 9h1v1h-1zM10 9h1v1h-1zM13 9h1v1h-1zM16 9h1v1h-1zM0 10h1v1h-1zM4 10h1v1h-1zM16 10h1v1h-1zM1 11h1v1h-1zM4 11h1v1h-1zM16 11h1v1h-1zM2 12h1v1h-1zM16 12h1v1h-1zM2 13h1v1h-1zM16 13h1v1h-1zM3 14h1v1h-1zM16 14h1v1h-1zM3 15h1v1h-1zM15 15h1v1h-1zM4 16h1v1h-1zM15 16h1v1h-1zM4 17h1v1h-1zM15 17h1v1h-1zM5 18h1v1h-1zM14 18h1v1h-1zM5 19h1v1h-1zM14 19h1v1h-1zM5 20h10v1h-10z" fill="#0a0a0a"/></g></svg>
<div id="ovl" class="abs"></div>
<div id="ovln" class="abs">02</div><div id="ovltxt" class="abs">認證課程成果操作步驟</div>
</body>
</html>
